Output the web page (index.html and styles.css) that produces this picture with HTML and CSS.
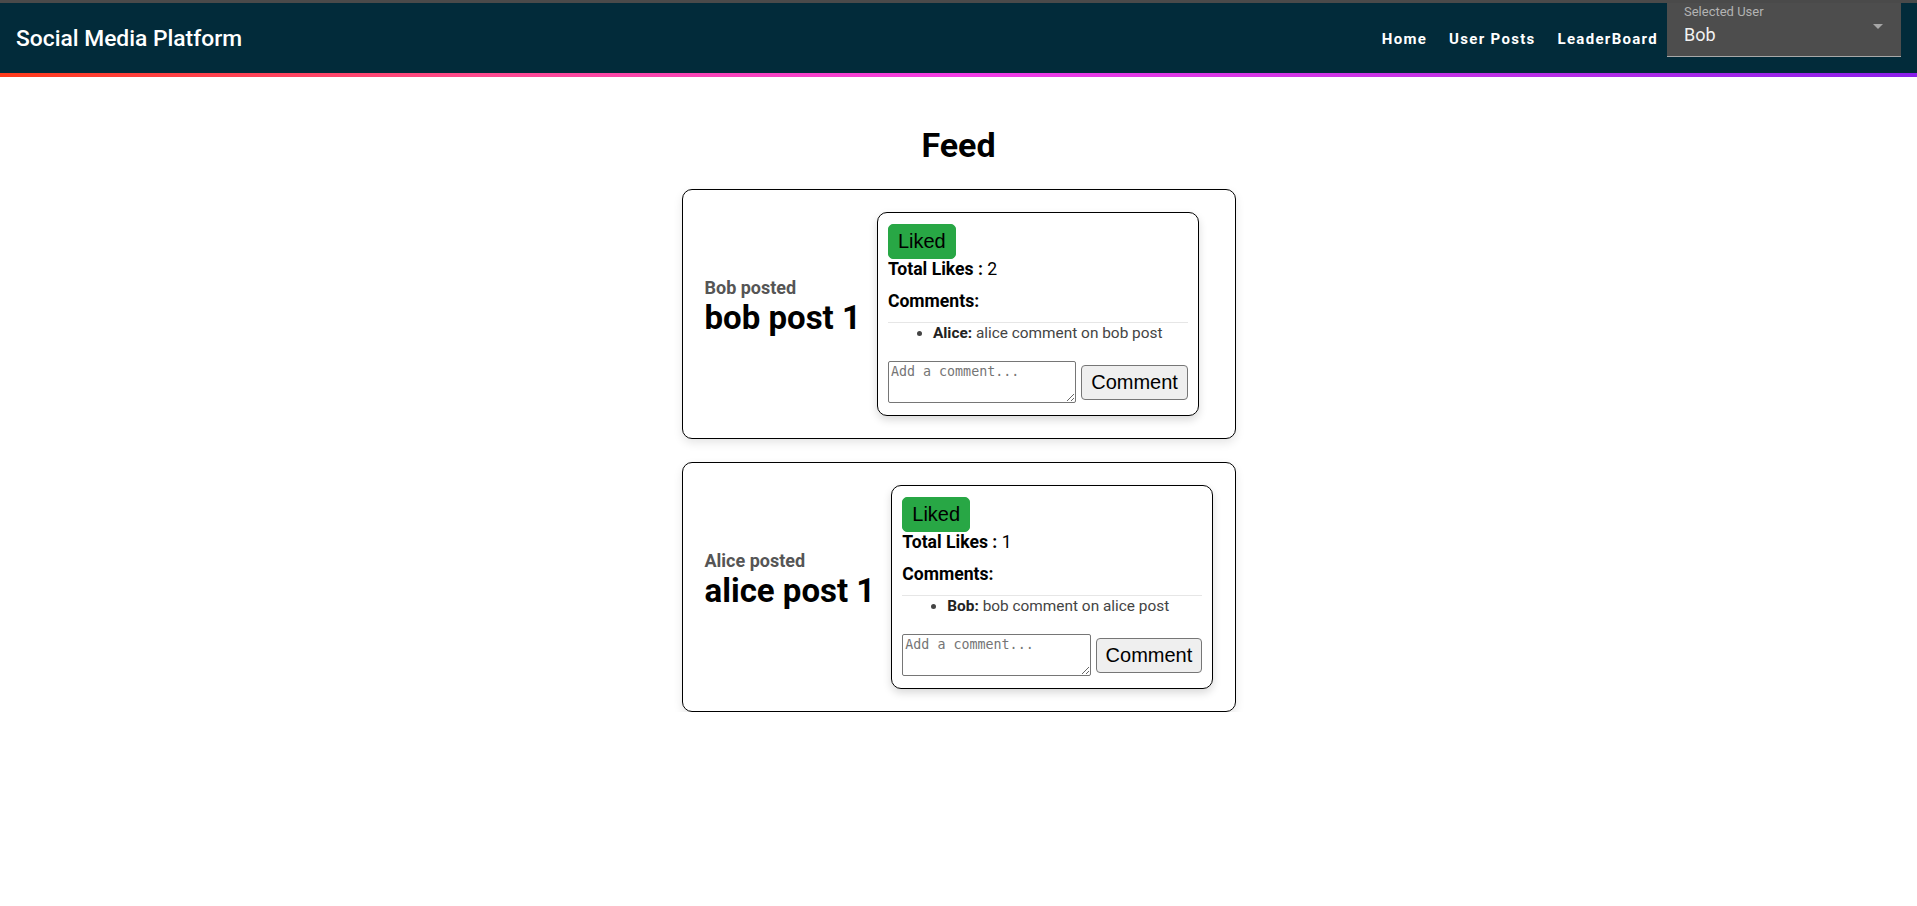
FILE: index.html
```html
<!DOCTYPE html>
<html lang="en">
<head>
<meta charset="utf-8">
<title>Social Media Platform</title>
<link rel="stylesheet" href="styles.css">
</head>
<body>
<div class="topline"></div>
<header class="appbar">
  <div class="brand">Social Media Platform</div>
  <nav class="nav">
    <a class="nav-link" href="#">Home</a>
    <a class="nav-link" href="#">User Posts</a>
    <a class="nav-link" href="#">LeaderBoard</a>
  </nav>
  <div class="user-select">
    <div class="select-text">
      <div class="select-label">Selected User</div>
      <div class="select-value">Bob</div>
    </div>
    <svg class="select-arrow" width="24" height="24" viewBox="0 0 24 24"><path d="M7 10l5 5 5-5z"/></svg>
  </div>
</header>
<div class="accent"></div>

<main class="feed">
  <h1 class="feed-title">Feed</h1>
  <div class="post-list">
    <div class="post-card">
      <div class="post-head">
        <div class="post-author">Bob posted</div>
        <div class="post-title">bob post 1</div>
      </div>
      <div class="post-box">
        <button class="btn liked">Liked</button>
        <div class="likes"><b>Total Likes :</b> 2</div>
        <div class="comments-title">Comments:</div>
        <ul class="comment-list">
          <li><strong>Alice:</strong> alice comment on bob post</li>
        </ul>
        <div class="comment-form">
          <textarea class="comment-input" placeholder="Add a comment..."></textarea>
          <button class="btn comment-btn">Comment</button>
        </div>
      </div>
    </div>

    <div class="post-card">
      <div class="post-head">
        <div class="post-author">Alice posted</div>
        <div class="post-title">alice post 1</div>
      </div>
      <div class="post-box">
        <button class="btn liked">Liked</button>
        <div class="likes"><b>Total Likes :</b> 1</div>
        <div class="comments-title">Comments:</div>
        <ul class="comment-list">
          <li><strong>Bob:</strong> bob comment on alice post</li>
        </ul>
        <div class="comment-form">
          <textarea class="comment-input" placeholder="Add a comment..."></textarea>
          <button class="btn comment-btn">Comment</button>
        </div>
      </div>
    </div>
  </div>
</main>
</body>
</html>
```

FILE: styles.css
```css
* { box-sizing: border-box; }

body {
  margin: 0;
  font-family: Roboto, "Liberation Sans", Arial, sans-serif;
  color: #000;
  background: #fff;
}

.topline {
  height: 3px;
  background: #4a4a4a;
}

.appbar {
  height: 70px;
  background: #022b3a;
  display: flex;
  align-items: center;
  padding: 0 16px;
  color: #fff;
}

.brand {
  font-size: 22.8px;
  font-weight: 500;
  flex: 1;
}

.nav {
  display: flex;
  align-items: center;
  gap: 6px;
  padding-top: 2px;
}

.nav-link {
  color: #fff;
  text-decoration: none;
  font-size: 15px;
  font-weight: 700;
  letter-spacing: 1.3px;
  padding: 0 8px;
}

.user-select {
  align-self: flex-start;
  width: 234px;
  height: 54px;
  margin-left: 1px;
  background: #4d4d4d;
  border-bottom: 1px solid #a8a8a8;
  display: flex;
  padding: 1px 11px 0 17px;
}

.select-text { flex: 1; }

.select-label {
  font-size: 13px;
  color: #b3b3b3;
}

.select-value {
  margin-top: 5px;
  font-size: 18px;
  color: #f2f2f2;
}

.select-arrow {
  margin-top: 10px;
  fill: #a6a6a6;
}

.accent {
  height: 4px;
  background: linear-gradient(to right, #ff3a1a 0%, #ff4a8e 25%, #f53de6 50%, #c532e6 75%, #8a1eea 100%);
}

.feed-title {
  text-align: center;
  font-size: 34px;
  font-weight: 700;
  line-height: 40px;
  margin: 48px 0 24px;
}

.post-list {
  display: flex;
  flex-direction: column;
  align-items: center;
  gap: 23px;
}

.post-card {
  width: 554px;
  border: 1px solid #000;
  border-radius: 10px;
  padding: 22px;
  display: flex;
  align-items: center;
  gap: 16px;
  box-shadow: 0 4px 10px rgba(0, 0, 0, 0.1);
}

.post-head {
  padding-bottom: 14px;
  white-space: nowrap;
}

.post-author {
  font-size: 18px;
  font-weight: 700;
  color: #555;
}

.post-title {
  font-size: 33px;
  font-weight: 700;
  color: #000;
}

.post-box {
  flex-shrink: 0;
  width: 322px;
  border: 1px solid #000;
  border-radius: 10px;
  padding: 11px 10px 12px;
  box-shadow: 0 4px 8px rgba(0, 0, 0, 0.15);
}

.btn {
  font-family: "Liberation Sans", Arial, sans-serif;
  font-size: 20px;
  line-height: 23px;
  padding: 5px 9px;
  border: 1px solid #767676;
  border-radius: 4px;
  background: #efefef;
  color: #000;
  cursor: pointer;
}

.liked {
  display: block;
  background: #28a745;
  border-color: #28a745;
  border-radius: 5px;
}

.likes {
  font-size: 17.6px;
  line-height: 20px;
}

.comments-title {
  margin-top: 12px;
  padding-bottom: 11px;
  border-bottom: 1px solid #e6e6e6;
  font-size: 17.6px;
  font-weight: 700;
  line-height: 20px;
}

.comment-list {
  margin: 1px 0 0;
  padding-left: 45px;
  font-size: 15.4px;
  line-height: 18px;
  color: #444;
}

.comment-list strong { color: #222; }

.comment-form {
  display: flex;
  align-items: center;
  gap: 5px;
  margin-top: 19px;
}

.comment-input {
  flex: 1;
  height: 42px;
  border: 1px solid #767676;
  border-radius: 2px;
  padding: 2px;
  font-family: "DejaVu Sans Mono", "Liberation Mono", monospace;
  font-size: 13.33px;
}

.comment-input::placeholder { color: #757575; }
```
